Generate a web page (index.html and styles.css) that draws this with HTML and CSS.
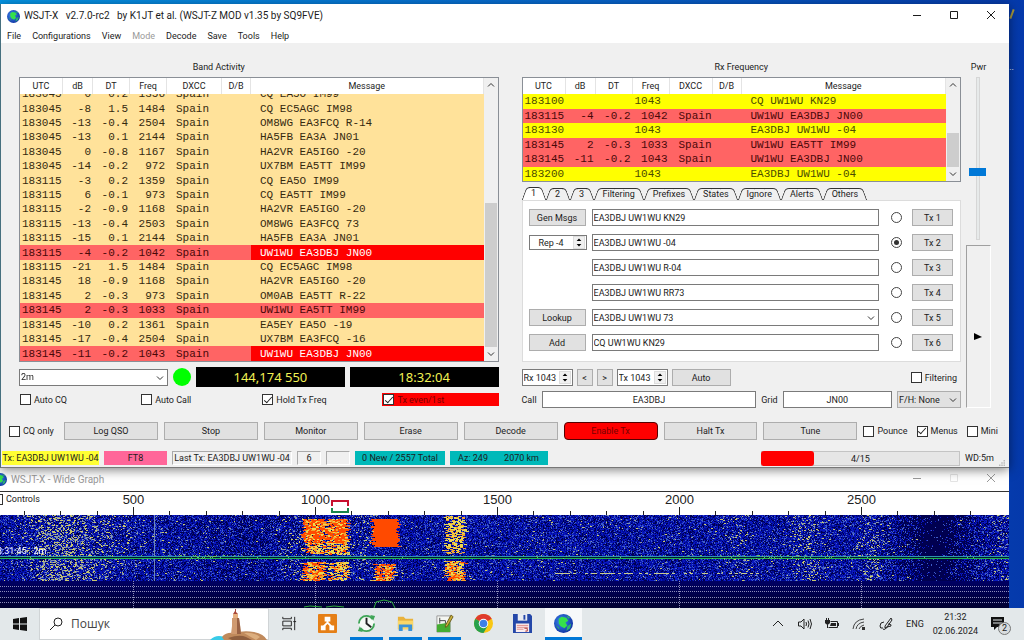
FILE: index.html
```html
<!DOCTYPE html>
<html lang="en">

<head>
    <meta charset="utf-8">
    <title>WSJT-X</title>
    <meta name="viewport" content="width=device-width, initial-scale=1">
    <link rel="stylesheet" href="styles.css">
</head>

<body>
    <svg class="defs" width="0" height="0">
        <defs>
            <radialGradient id="sea" cx="40%" cy="40%" r="60%">
                <stop offset="0" stop-color="#3f8cf0" />
                <stop offset="1" stop-color="#1238a8" />
            </radialGradient>
            <symbol id="globe" viewBox="0 0 20 20">
                <circle cx="10" cy="10" r="10" fill="url(#sea)" />
                <path d="M5 5 L8 3 L13 4 L15 7 L12 9 L14 12 L11 15 L7 13 L5 10 Z" fill="#35e04a" />
                <path d="M14 13 L18 10 L17 15 L13 18 Z M2 12 L5 14 L6 17 Z M13 1 L17 4 L15 5 Z" fill="#2bb46c" />
            </symbol>
            <symbol id="chev" viewBox="0 0 8 8">
                <path d="M1 2.500 L4 5.500 L7 2.500" fill="none" stroke="#333" />
            </symbol>
            <symbol id="min" viewBox="0 0 10 10"><path d="M1 5.500 H9" stroke="currentColor" /></symbol>
            <symbol id="max" viewBox="0 0 10 10"><path d="M1.500 1.500 H8.500 V8.500 H1.500 Z" fill="none" stroke="currentColor" /></symbol>
            <symbol id="close" viewBox="0 0 10 10"><path d="M1 1 L9 9 M9 1 L1 9" stroke="currentColor" /></symbol>
        </defs>
    </svg>

    <div class="desktop">
        <span class="shortcut-mark"></span>
        <span class="shortcut-name">..</span>

        <main class="window main-window">
            <header class="titlebar">
                <svg class="app-icon"><use href="#globe" /></svg>
                <h1>WSJT-X &nbsp; v2.7.0-rc2 &nbsp; by K1JT et al. (WSJT-Z MOD v1.35 by SQ9FVE)</h1>
                <div class="window-buttons">
                    <button aria-label="Minimize"><svg><use href="#min" /></svg></button>
                    <button aria-label="Maximize"><svg><use href="#max" /></svg></button>
                    <button aria-label="Close"><svg><use href="#close" /></svg></button>
                </div>
            </header>
            <nav class="menubar">
                <button>File</button>
                <button>Configurations</button>
                <button>View</button>
                <button disabled>Mode</button>
                <button>Decode</button>
                <button>Save</button>
                <button>Tools</button>
                <button>Help</button>
            </nav>

            <div class="panels">
                <section class="left">
                    <h2>Band Activity</h2>
                    <div class="log band-log">
                        <div class="log-view">
                            <table>
                                <colgroup>
                                    <col class="c-utc"><col class="c-db"><col class="c-dt"><col class="c-freq"><col class="c-dxcc"><col class="c-new"><col>
                                </colgroup>
                                <thead>
                                    <tr><th>UTC</th><th>dB</th><th>DT</th><th>Freq</th><th>DXCC</th><th>D/B</th><th>Message</th></tr>
                                </thead>
                                <tbody>
                                    <tr><td>183045</td><td>0</td><td>0.2</td><td>1356</td><td>Spain</td><td></td><td>CQ EA5O IM99</td></tr>
                                    <tr><td>183045</td><td>-8</td><td>1.5</td><td>1484</td><td>Spain</td><td></td><td>CQ EC5AGC IM98</td></tr>
                                    <tr><td>183045</td><td>-13</td><td>-0.4</td><td>2504</td><td>Spain</td><td></td><td>OM8WG EA3FCQ R-14</td></tr>
                                    <tr><td>183045</td><td>-13</td><td>0.1</td><td>2144</td><td>Spain</td><td></td><td>HA5FB EA3A JN01</td></tr>
                                    <tr><td>183045</td><td>0</td><td>-0.8</td><td>1167</td><td>Spain</td><td></td><td>HA2VR EA5IGO -20</td></tr>
                                    <tr><td>183045</td><td>-14</td><td>-0.2</td><td>972</td><td>Spain</td><td></td><td>UX7BM EA5TT IM99</td></tr>
                                    <tr><td>183115</td><td>-3</td><td>0.2</td><td>1359</td><td>Spain</td><td></td><td>CQ EA5O IM99</td></tr>
                                    <tr><td>183115</td><td>6</td><td>-0.1</td><td>973</td><td>Spain</td><td></td><td>CQ EA5TT IM99</td></tr>
                                    <tr><td>183115</td><td>-2</td><td>-0.9</td><td>1168</td><td>Spain</td><td></td><td>HA2VR EA5IGO -20</td></tr>
                                    <tr><td>183115</td><td>-13</td><td>-0.4</td><td>2503</td><td>Spain</td><td></td><td>OM8WG EA3FCQ 73</td></tr>
                                    <tr><td>183115</td><td>-15</td><td>0.1</td><td>2144</td><td>Spain</td><td></td><td>HA5FB EA3A JN01</td></tr>
                                    <tr class="mine call"><td>183115</td><td>-4</td><td>-0.2</td><td>1042</td><td>Spain</td><td></td><td>UW1WU EA3DBJ JN00</td></tr>
                                    <tr><td>183115</td><td>-21</td><td>1.5</td><td>1484</td><td>Spain</td><td></td><td>CQ EC5AGC IM98</td></tr>
                                    <tr><td>183145</td><td>18</td><td>-0.9</td><td>1168</td><td>Spain</td><td></td><td>HA2VR EA5IGO -20</td></tr>
                                    <tr><td>183145</td><td>2</td><td>-0.3</td><td>973</td><td>Spain</td><td></td><td>OM0AB EA5TT R-22</td></tr>
                                    <tr class="mine"><td>183145</td><td>2</td><td>-0.3</td><td>1033</td><td>Spain</td><td></td><td>UW1WU EA5TT IM99</td></tr>
                                    <tr><td>183145</td><td>-10</td><td>0.2</td><td>1361</td><td>Spain</td><td></td><td>EA5EY EA5O -19</td></tr>
                                    <tr><td>183145</td><td>-17</td><td>-0.4</td><td>2504</td><td>Spain</td><td></td><td>UX7BM EA3FCQ -16</td></tr>
                                    <tr class="mine call"><td>183145</td><td>-11</td><td>-0.2</td><td>1043</td><td>Spain</td><td></td><td>UW1WU EA3DBJ JN00</td></tr>
                                </tbody>
                            </table>
                        </div>
                        <div class="scrollbar">
                            <svg class="up"><use href="#chev" /></svg>
                            <div class="thumb"></div>
                            <svg><use href="#chev" /></svg>
                        </div>
                    </div>
                    <div class="band-row">
                        <div class="combo band">
                            <select aria-label="Band"><option>2m</option></select>
                            <svg><use href="#chev" /></svg>
                        </div>
                        <span class="led"></span>
                        <output class="lcd">144,174 550</output>
                        <output class="lcd">18:32:04</output>
                    </div>
                    <div class="checks">
                        <label><input type="checkbox"> Auto CQ</label>
                        <label><input type="checkbox"> Auto Call</label>
                        <label><input type="checkbox" checked> Hold Tx Freq</label>
                        <label class="tx-first"><input type="checkbox" checked> Tx even/1st</label>
                    </div>
                </section>

                <section class="right">
                    <h2>Rx Frequency</h2>
                    <div class="log rx-log">
                        <div class="log-view">
                            <table>
                                <colgroup>
                                    <col class="c-utc"><col class="c-db"><col class="c-dt"><col class="c-freq"><col class="c-rx-dxcc"><col class="c-new"><col>
                                </colgroup>
                                <thead>
                                    <tr><th>UTC</th><th>dB</th><th>DT</th><th>Freq</th><th>DXCC</th><th>D/B</th><th>Message</th></tr>
                                </thead>
                                <tbody>
                                    <tr class="sent"><td>183100</td><td></td><td></td><td>1043</td><td></td><td></td><td>CQ UW1WU KN29</td></tr>
                                    <tr class="mine"><td>183115</td><td>-4</td><td>-0.2</td><td>1042</td><td>Spain</td><td></td><td>UW1WU EA3DBJ JN00</td></tr>
                                    <tr class="sent"><td>183130</td><td></td><td></td><td>1043</td><td></td><td></td><td>EA3DBJ UW1WU -04</td></tr>
                                    <tr class="mine"><td>183145</td><td>2</td><td>-0.3</td><td>1033</td><td>Spain</td><td></td><td>UW1WU EA5TT IM99</td></tr>
                                    <tr class="mine"><td>183145</td><td>-11</td><td>-0.2</td><td>1043</td><td>Spain</td><td></td><td>UW1WU EA3DBJ JN00</td></tr>
                                    <tr class="sent"><td>183200</td><td></td><td></td><td>1043</td><td></td><td></td><td>EA3DBJ UW1WU -04</td></tr>
                                </tbody>
                            </table>
                        </div>
                        <div class="scrollbar">
                            <svg class="up"><use href="#chev" /></svg>
                            <div class="thumb"></div>
                            <svg><use href="#chev" /></svg>
                        </div>
                    </div>

                    <div class="tabs" role="tablist">
                        <button role="tab" aria-selected="true"><span>1</span></button>
                        <button role="tab"><span>2</span></button>
                        <button role="tab"><span>3</span></button>
                        <button role="tab"><span>Filtering</span></button>
                        <button role="tab"><span>Prefixes</span></button>
                        <button role="tab"><span>States</span></button>
                        <button role="tab"><span>Ignore</span></button>
                        <button role="tab"><span>Alerts</span></button>
                        <button role="tab"><span>Others</span></button>
                    </div>
                    <div class="messages">
                        <button class="btn">Gen Msgs</button>
                        <input type="text" value="EA3DBJ UW1WU KN29" aria-label="Message 1">
                        <input type="radio" name="next" aria-label="Next Tx 1">
                        <button class="btn">Tx 1</button>

                        <div class="spin report">
                            <input type="text" value="Rep -4" aria-label="Report">
                            <svg viewBox="0 0 12 14"><path d="M3 5 L6 2 L9 5 Z M3 9 L6 12 L9 9 Z" /></svg>
                        </div>
                        <input type="text" value="EA3DBJ UW1WU -04" aria-label="Message 2">
                        <input type="radio" name="next" aria-label="Next Tx 2" checked>
                        <button class="btn">Tx 2</button>

                        <span></span>
                        <input type="text" value="EA3DBJ UW1WU R-04" aria-label="Message 3">
                        <input type="radio" name="next" aria-label="Next Tx 3">
                        <button class="btn">Tx 3</button>

                        <span></span>
                        <input type="text" value="EA3DBJ UW1WU RR73" aria-label="Message 4">
                        <input type="radio" name="next" aria-label="Next Tx 4">
                        <button class="btn">Tx 4</button>

                        <button class="btn">Lookup</button>
                        <div class="combo">
                            <select aria-label="Message 5"><option>EA3DBJ UW1WU 73</option></select>
                            <svg><use href="#chev" /></svg>
                        </div>
                        <input type="radio" name="next" aria-label="Next Tx 5">
                        <button class="btn">Tx 5</button>

                        <button class="btn">Add</button>
                        <input type="text" value="CQ UW1WU KN29" aria-label="Message 6">
                        <input type="radio" name="next" aria-label="Next Tx 6">
                        <button class="btn">Tx 6</button>
                    </div>

                    <div class="freq-row">
                        <div class="spin">
                            <input type="text" value="Rx 1043" aria-label="Rx frequency">
                            <svg viewBox="0 0 12 14"><path d="M3 5 L6 2 L9 5 Z M3 9 L6 12 L9 9 Z" /></svg>
                        </div>
                        <button class="btn arrow">&lt;</button>
                        <button class="btn arrow">&gt;</button>
                        <div class="spin">
                            <input type="text" value="Tx 1043" aria-label="Tx frequency">
                            <svg viewBox="0 0 12 14"><path d="M3 5 L6 2 L9 5 Z M3 9 L6 12 L9 9 Z" /></svg>
                        </div>
                        <button class="btn auto">Auto</button>
                        <label class="filtering"><input type="checkbox"> Filtering</label>
                    </div>
                    <div class="call-row">
                        <label for="call">Call</label>
                        <input id="call" type="text" value="EA3DBJ">
                        <label for="grid">Grid</label>
                        <input id="grid" type="text" value="JN00">
                        <div class="combo fox">
                            <select aria-label="Fox or hound"><option>F/H: None</option></select>
                            <svg><use href="#chev" /></svg>
                        </div>
                    </div>
                </section>

                <aside class="power">
                    <label for="pwr">Pwr</label>
                    <input id="pwr" type="range" value="41">
                    <div class="meter"><svg viewBox="0 0 8 8"><path d="M0 0 L8 4 L0 7 Z" /></svg></div>
                </aside>
            </div>

            <div class="actions">
                <label><input type="checkbox"> CQ only</label>
                <button class="btn">Log QSO</button>
                <button class="btn">Stop</button>
                <button class="btn">Monitor</button>
                <button class="btn">Erase</button>
                <button class="btn">Decode</button>
                <button class="btn enabled">Enable Tx</button>
                <button class="btn">Halt Tx</button>
                <button class="btn">Tune</button>
                <label><input type="checkbox"> Pounce</label>
                <label><input type="checkbox" checked> Menus</label>
                <label><input type="checkbox"> Mini</label>
            </div>

            <footer class="statusbar">
                <span class="st-tx">Tx: EA3DBJ UW1WU -04</span>
                <span class="st-mode">FT8</span>
                <span class="st-last">Last Tx: EA3DBJ UW1WU -04</span>
                <span class="st-small">6</span>
                <span class="st-small"></span>
                <span class="st-new">0 New / 2557 Total</span>
                <span class="st-az"><b>Az: 249</b><b>2070 km</b></span>
                <div class="progress"><i></i>4/15</div>
                <span class="st-wd">WD:5m</span>
                <svg class="grip" viewBox="0 0 8 8"><path d="M6 0h2v2h-2zM3 3h2v2h-2zM6 3h2v2h-2zM0 6h2v2h-2zM3 6h2v2h-2zM6 6h2v2h-2z" /></svg>
            </footer>
        </main>

        <section class="window wide-graph">
            <header class="titlebar">
                <svg class="app-icon"><use href="#globe" /></svg>
                <h1>WSJT-X - Wide Graph</h1>
                <div class="window-buttons">
                    <button aria-label="Minimize"><svg><use href="#min" /></svg></button>
                    <button aria-label="Maximize" disabled><svg><use href="#max" /></svg></button>
                    <button aria-label="Close"><svg><use href="#close" /></svg></button>
                </div>
            </header>
            <div class="ruler">
                <svg id="scale"></svg>
                <label class="controls"><input type="checkbox"> Controls</label>
            </div>
            <div class="waterfall">
                <canvas id="waterfall"></canvas>
                <span class="stamp">18:31:45 &nbsp; 2m</span>
            </div>
        </section>
    </div>

    <footer class="taskbar">
        <button class="start" aria-label="Start">
            <svg viewBox="0 0 14 14"><path d="M0 2 L6 1 V6.500 H0 Z M7 1 L14 0 V6.500 H7 Z M0 7.500 H6 V13 L0 12 Z M7 7.500 H14 V14 L7 13 Z" fill="#111" /></svg>
        </button>
        <div class="search">
            <svg viewBox="0 0 14 14"><circle cx="9" cy="5" r="4" fill="none" stroke="#222" /><path d="M6 8 L1 13" stroke="#222" /></svg>
            <input type="search" placeholder="Пошук" aria-label="Пошук">
            <svg class="lighthouse" viewBox="0 0 58 31">
                <path d="M0 31 Q6 25 14 28 L20 31 Z" fill="#39cbe8" />
                <path d="M12 28 Q16 23 24 24 Q34 21 44 23 Q54 25 57 31 H14 Z" fill="#c08a5c" />
                <path d="M18 29 Q30 25 36 28 L42 31 H22 Z" fill="#8f5f3f" />
                <path d="M34 24 Q44 23 50 28 L46 31 Z" fill="#dcae7e" />
                <path d="M22 9 H29 L30 16 L31 25 H21 L22 17 Z" fill="#d09a70" />
                <path d="M27 9 H29 L30 16 L31 25 H27 Z" fill="#9a6244" />
                <path d="M23 5 H28 V9 H23 Z" fill="#e7b07f" />
                <path d="M23 5 L25 2 L28 5 Z" fill="#a84838" />
                <path d="M25.500 0 V3" stroke="#a84838" />
            </svg>
        </div>
        <div class="tasks">
            <button aria-label="Task view">
                <svg viewBox="0 0 20 20"><path d="M4 3 V5 H13 V3 M4 17 V15 H13 V17 M4 7.500 H13 V12.500 H4 Z M16.500 3 V17 M15 8 H18" fill="none" stroke="#222" /></svg>
            </button>
            <button aria-label="Cluster">
                <svg viewBox="0 0 20 20"><rect width="20" height="20" rx="1" fill="#e57f17" /><path d="M10 7 V10 M10 9 L6 13 M10 9 L14 13" stroke="#fff" stroke-width="2" /><path d="M7 3 H13 V8 H7 Z M3 12 H8 V17 H3 Z M12 12 H17 V17 H12 Z" fill="#fff" /></svg>
            </button>
            <button class="running" aria-label="Time sync">
                <svg viewBox="0 0 20 20"><circle cx="10" cy="10" r="8" fill="#f6faf6" stroke="#3fa557" stroke-width="2" stroke-dasharray="20 5" /><path d="M14 1 L19 2 L17 7 Z M6 19 L1 18 L3 13 Z" fill="#3fa557" /><path d="M10 4 V10 L15 14" fill="none" stroke="#222" stroke-width="2" /></svg>
            </button>
            <button class="running" aria-label="Explorer">
                <svg viewBox="0 0 20 20"><path d="M2 3 H8 L10 5 H18 V16 H2 Z" fill="#e9b23c" /><path d="M2 7 H18 V16 H2 Z" fill="#fbd767" /><path d="M3 11 H17 V18 H13 V14 H7 V18 H3 Z" fill="#3b93d8" /></svg>
            </button>
            <button class="running" aria-label="Log">
                <svg viewBox="0 0 20 20"><path d="M2 2 H16 V19 H2 Z" fill="#f4f6f2" stroke="#999" /><path d="M2 11 L16 9 V19 H2 Z" fill="#44ad32" /><path d="M5 7 H11 V10 M5 4 V10" stroke="#444" fill="none" /><path d="M17 1 L19 3 L13 13 L11 14 L11 12 Z" fill="#c9b13b" stroke="#6a5a1a" /></svg>
            </button>
            <button aria-label="Chrome">
                <svg viewBox="0 0 20 20"><circle cx="10" cy="10" r="10" fill="#f9c713" /><path d="M10 10 L1.340 5 A10 10 0 0 1 18.660 5 Z" fill="#df3a2c" /><path d="M1.340 5 A10 10 0 0 0 10 20 L14.300 12.500 L10 10 Z" fill="#28a14c" /><circle cx="10" cy="10" r="5" fill="#fff" /><circle cx="10" cy="10" r="4" fill="#3d7fe8" /></svg>
            </button>
            <button aria-label="Commander">
                <svg viewBox="0 0 20 20"><path d="M0 0 H18 L20 2 V20 H0 Z" fill="#2447a8" /><path d="M5 0 H15 V7 H5 Z" fill="#e9ecf2" /><path d="M11 1 H13 V6 H11 Z" fill="#2447a8" /><path d="M3 10 H17 V19 H3 Z" fill="#fbeeee" /><path d="M4 12 H16 M4 14 H16 M4 16 H11" stroke="#d88" /><path d="M12 15 h3 v3 h-2" fill="none" stroke="#a33" /></svg>
            </button>
            <button class="running active" aria-label="WSJT-X"><svg><use href="#globe" /></svg></button>
        </div>
        <div class="tray">
            <svg viewBox="0 0 14 14"><path d="M2 9 L7 4 L12 9" fill="none" stroke="#222" /></svg>
            <svg viewBox="0 0 14 14"><path d="M0.500 5 H3 L6 2 V12 L3 9 H0.500 Z M8 5 Q9 7 8 9 M10 3.500 Q12 7 10 10.500 M12 2 Q15 7 12 12" fill="none" stroke="#222" /></svg>
            <svg viewBox="0 0 14 14"><path d="M5.500 4.500 H12.500 V10.500 H3.500" fill="none" stroke="#222" /><path d="M6 6 H11 V9 H5 Z M13 6 H14 V9 H13 Z" fill="#222" /><path d="M0 3 H5 V6 Q2.500 9 0 6 Z M1 1 H2 V3 H1 Z M3 1 H4 V3 H3 Z M2 7 H3 V11 H2 Z" fill="#222" /></svg>
            <svg viewBox="0 0 14 14"><path d="M1 12 Q2 3 12 2 M4 12 Q5 6 12 5 M7 12 Q8 9 12 8" fill="none" stroke="#444" /><path d="M10 10 H13 V13 H10 Z" fill="#333" /></svg>
            <svg viewBox="0 0 14 14"><path d="M12 1 L13 3 L8 10 L6 11 L6 9 Z M5 5 Q1 5 1 9 Q1 12 4 11 M9 7 Q13 7 12 9 Q9 9 6 12 Q5 13 4 12" fill="none" stroke="#222" /></svg>
            <span class="lang">ENG</span>
            <time>21:32<br>02.06.2024</time>
            <div class="notes">
                <svg viewBox="0 0 14 14"><path d="M0 0 H13 V10 H6 L3 13 V10 H0 Z" fill="#111" /><path d="M2 3 H11 M2 6 H11" stroke="#e3e8ea" /></svg>
                <span class="badge">2</span>
            </div>
        </div>
    </footer>

    <script src="script.js"></script>
</body>

</html>
```
FILE: styles.css
```css
* {
    box-sizing: border-box;
}

html,
body {
    margin: 0;
    padding: 0;
    height: 100%;
}

body {
    display: flex;
    flex-direction: column;
    overflow: hidden;
    font: 9px/12px Roboto, "Noto Sans", sans-serif;
    color: #1c1c1c;
}

button,
input,
select {
    font: inherit;
    color: inherit;
    margin: 0;
    padding: 0;
    border: 0;
    background: none;
    border-radius: 0;
    appearance: none;
}

h1,
h2 {
    margin: 0;
    font-weight: normal;
    font-size: inherit;
}

label {
    display: flex;
    align-items: center;
    gap: 3px;
    white-space: nowrap;
}

.defs {
    position: absolute;
}

/* desktop and windows */

.desktop {
    position: relative;
    flex: 1;
    overflow: hidden;
    background: linear-gradient(90deg, #0596e6, #0763cb 60%, #0539ab);
}

.shortcut-mark {
    position: absolute;
    right: 11px;
    top: 9px;
    width: 2px;
    height: 10px;
    background: #a99b3c;
    transform: rotate(20deg);
}

.shortcut-name {
    position: absolute;
    right: 10px;
    top: 61px;
    color: #fff;
}

.window {
    position: absolute;
    left: 0;
    right: 15px;
}

.main-window {
    top: 4px;
    z-index: 1;
    background: #f0f0f0;
    border-left: 1px solid #46707f;
    border-bottom: 1px solid #777;
    box-shadow: 0 2px 10px rgba(0, 0, 0, 0.5);
}

.titlebar {
    display: flex;
    align-items: center;
    height: 24px;
    padding-left: 6px;
    background: #fff;
}

.titlebar h1 {
    flex: 1;
    margin-left: 4px;
    font-size: 10px;
    line-height: 14px;
}

.app-icon {
    width: 13px;
    height: 13px;
}

.window-buttons {
    display: flex;
}

.window-buttons button {
    width: 37px;
    height: 20px;
}

.window-buttons svg {
    width: 10px;
    height: 10px;
}

.menubar {
    display: flex;
    gap: 11px;
    height: 15px;
    padding: 1px 0 0 6px;
    background: #fff;
}

.menubar button:disabled {
    color: #999;
}

/* columns */

.panels {
    display: grid;
    grid-template-columns: 497fr 439fr 25px;
    column-gap: 5px;
    padding: 18px 18px 0 18px;
}

.left {
    margin-right: 18px;
}

h2 {
    margin-bottom: 4px;
    text-align: center;
}

.left h2 {
    padding-right: 80px;
}

.log {
    display: flex;
    border: 1px solid #8a8f96;
    background: #fff;
}

.band-log {
    height: 285px;
}

.rx-log {
    height: 105px;
}

.log-view {
    flex: 1;
    overflow: hidden;
}

.log table {
    width: 100%;
    table-layout: fixed;
    border-collapse: separate;
    border-spacing: 0;
    background: #ffe29a;
}

.band-log table {
    height: 290px;
}

.rx-log table {
    height: 103px;
}

.log th {
    position: sticky;
    top: 0;
    height: 16px;
    padding: 0;
    background: #fff;
    border-right: 1px solid #e4e4e4;
    font-weight: normal;
}

.log td {
    padding: 0 2px;
    font: 11px/12px "Liberation Mono", monospace;
    white-space: nowrap;
    color: #35290f;
}

.log td:nth-child(n+2):nth-child(-n+4) {
    text-align: right;
}

.log td:nth-child(n+5) {
    padding-left: 9px;
}

.c-utc {
    width: 43px;
}

.c-db {
    width: 30px;
}

.c-dt,
.c-freq {
    width: 37px;
}

.c-dxcc {
    width: 55px;
}

.c-rx-dxcc {
    width: 43px;
}

.c-new {
    width: 29px;
}

.log .mine td {
    background: #ff6464;
    color: #4a0808;
}

.log .call td:last-child {
    background: #f00;
    color: #fff;
}

.log .sent td {
    background: #ff0;
    color: #4c4c00;
}

.log .sent td:nth-child(4) {
    text-align: left;
}

.scrollbar {
    display: flex;
    flex-direction: column;
    align-items: center;
    width: 14px;
    padding: 3px 1px;
    background: #f0f0f0;
}

.scrollbar svg {
    width: 8px;
    height: 8px;
}

.scrollbar .up {
    transform: rotate(180deg);
}

.thumb {
    width: 12px;
    margin-top: auto;
    margin-bottom: 3px;
    background: #cdcdcd;
}

.band-log .thumb {
    height: 144px;
}

.rx-log .thumb {
    height: 34px;
}

/* form controls */

.btn {
    height: 17px;
    border: 1px solid #adadad;
    background: #e1e1e1;
    text-align: center;
}

input[type="text"],
.combo,
.spin {
    height: 17px;
    min-width: 0;
    border: 1px solid #7a7a7a;
    background: #fff;
}

input[type="text"] {
    padding: 0 1px;
}

.combo {
    position: relative;
}

.combo select {
    display: block;
    width: 100%;
    height: 15px;
    padding: 0 1px;
}

.combo svg {
    position: absolute;
    right: 3px;
    top: 4px;
    width: 8px;
    height: 8px;
    pointer-events: none;
}

.spin {
    display: flex;
    align-items: center;
    width: 51px;
}

.spin input[type="text"] {
    flex: 1;
    width: 100%;
    height: 15px;
    border: 0;
}

.spin svg {
    flex: none;
    width: 12px;
    height: 13px;
    margin-right: 1px;
    border: 1px solid #ddd;
    background: #f0f0f0;
}

input[type="checkbox"] {
    display: grid;
    place-items: center;
    flex: none;
    width: 11px;
    height: 11px;
    border: 1px solid #333;
    background: #fff;
}

input[type="checkbox"]:checked::before {
    content: "";
    width: 7px;
    height: 3px;
    border-left: 1px solid #222;
    border-bottom: 1px solid #222;
    transform: translateY(-1px) rotate(-48deg);
}

input[type="radio"] {
    display: grid;
    place-items: center;
    width: 11px;
    height: 11px;
    border: 1px solid #444;
    border-radius: 50%;
    background: #fff;
}

input[type="radio"]:checked::before {
    content: "";
    width: 5px;
    height: 5px;
    border-radius: 50%;
    background: #333;
}

/* left column */

.band-row {
    display: flex;
    align-items: center;
    gap: 5px;
    margin-top: 5px;
}

.band {
    width: 149px;
}

.led {
    width: 18px;
    height: 18px;
    border-radius: 50%;
    background: #0f0;
}

.lcd {
    flex: 1;
    height: 20px;
    background: #000;
    color: #f2f254;
    font: 13px/20px "Noto Sans", sans-serif;
    text-align: center;
}

.checks {
    display: grid;
    grid-template-columns: 121fr 121fr 121fr 116fr;
    margin-top: 6px;
}

.checks label {
    height: 13px;
    padding-left: 1px;
}

.checks .tx-first {
    background: #f00;
    color: #700;
}

/* right column */

.tabs {
    display: flex;
    align-items: flex-end;
    height: 18px;
}

.tabs button {
    position: relative;
    min-width: 24px;
    height: 12px;
    padding: 0 9px;
}

.tabs button::before,
.tabs button::after {
    content: "";
    position: absolute;
    top: 0;
    bottom: 0;
    width: 50%;
    border-top: 1px solid #333;
}

.tabs button::before {
    left: 2px;
    border-left: 1px solid #333;
    border-top-left-radius: 4px;
    transform: skewX(-20deg);
}

.tabs button::after {
    right: 2px;
    border-right: 1px solid #333;
    border-top-right-radius: 4px;
    transform: skewX(20deg);
}

.tabs [aria-selected="true"] {
    height: 13px;
}

.tabs [aria-selected="true"]::before,
.tabs [aria-selected="true"]::after {
    background: #fff;
}

.tabs span {
    position: relative;
    z-index: 1;
    display: block;
    line-height: 13px;
}

.messages {
    display: grid;
    grid-template-columns: 57px 1fr 11px 45px;
    grid-auto-rows: 25px;
    align-items: center;
    column-gap: 6px;
    height: 162px;
    padding: 4px 7px 0 6px;
    border: 1px solid #dcdcdc;
    background: #fff;
}

.messages > :nth-child(4n+2) {
    margin-right: 6px;
}

.messages > :nth-child(4n) {
    margin-left: 4px;
}

.report {
    width: 58px;
    height: 15px;
}

.report input[type="text"] {
    height: 13px;
    text-align: center;
}

.freq-row {
    display: flex;
    gap: 4px;
    margin-top: 7px;
}

.arrow {
    width: 16px;
}

.auto {
    width: 59px;
}

.filtering {
    margin-left: auto;
    margin-right: 4px;
}

.call-row {
    display: flex;
    align-items: center;
    gap: 5px;
    margin-top: 5px;
}

.call-row input {
    text-align: center;
}

#call {
    flex: 2 1 0;
}

#grid {
    flex: 1 1 0;
}

.fox {
    width: 64px;
    background: #e1e1e1;
    border-color: #adadad;
}

/* power column */

.power {
    display: flex;
    flex-direction: column;
    align-items: center;
}

#pwr {
    width: 17px;
    height: 163px;
    margin-top: 4px;
    writing-mode: vertical-lr;
    direction: rtl;
}

#pwr::-webkit-slider-runnable-track {
    width: 4px;
    height: 100%;
    margin: 0 auto;
    border: 1px solid #d6d6d6;
    background: #e7eaea;
}

#pwr::-webkit-slider-thumb {
    appearance: none;
    width: 17px;
    height: 8px;
    margin-left: -8px;
    background: #0078d7;
}

.meter {
    display: grid;
    place-items: center;
    flex: 1;
    width: 100%;
    margin-top: 5px;
    padding-top: 20px;
    border: 1px solid #fff;
    border-left-color: #a0a0a0;
    border-top-color: #a0a0a0;
}

.meter svg {
    width: 8px;
    height: 8px;
}

/* bottom rows */

.actions {
    display: flex;
    align-items: center;
    gap: 6px;
    margin: 14px 11px 0 8px;
}

.actions .btn {
    flex: 1;
    height: 18px;
}

.actions .enabled {
    border: 1px solid #500;
    border-radius: 4px;
    background: #f00;
    color: #700;
}

.actions label:first-child {
    width: 49px;
}

.actions label:nth-last-child(-n+2) {
    margin-left: 3px;
}

.statusbar {
    display: flex;
    align-items: center;
    gap: 5px;
    height: 16px;
    margin: 10px 4px 1px 1px;
}

.statusbar > span {
    height: 14px;
    line-height: 14px;
    text-align: center;
    white-space: nowrap;
}

.st-tx {
    width: 97px;
    background: #ff3;
}

.st-mode {
    width: 63px;
    background: #ff6699;
}

.st-last,
.st-small {
    border: 1px solid #fff;
    border-top-color: #aaa;
    border-left-color: #aaa;
}

.statusbar .st-last,
.statusbar .st-small {
    line-height: 12px;
}

.st-last {
    width: 120px;
}

.st-small {
    width: 24px;
}

.st-new,
.st-az {
    background: #00b9b9;
}

.st-new {
    width: 90px;
}

.st-az {
    display: flex;
    justify-content: space-between;
    width: 98px;
    padding: 0 9px 0 8px;
}

.st-az b {
    font-weight: normal;
}

.progress {
    position: relative;
    width: 199px;
    height: 15px;
    margin-left: auto;
    border: 1px solid #c4c4c4;
    background: #e6e6e6;
    line-height: 15px;
    text-align: center;
}

.progress i {
    position: absolute;
    left: -1px;
    top: -1px;
    bottom: -1px;
    width: 53px;
    border-radius: 3px;
    background: #f00;
}

.grip {
    align-self: flex-end;
    width: 6px;
    height: 6px;
    fill: #bbb;
}

/* wide graph */

.wide-graph {
    top: 468px;
    bottom: 0;
    display: flex;
    flex-direction: column;
    background: #fff;
}

.wide-graph .titlebar {
    height: 24px;
    margin-left: -12px;
    border-bottom: 1px solid #333;
    color: #999;
}

.wide-graph button:disabled {
    color: #e4e4e4;
}

.ruler {
    position: relative;
    height: 23px;
}

.ruler svg {
    display: block;
    width: 100%;
    height: 23px;
}

.ruler text {
    font: 13px "Liberation Sans", sans-serif;
    text-anchor: middle;
    fill: #222;
}

.controls {
    position: absolute;
    left: -8px;
    top: 1px;
}

.waterfall {
    position: relative;
    flex: 1;
    overflow: hidden;
    background: #00004c;
}

.waterfall canvas {
    display: block;
}

.stamp {
    position: absolute;
    left: -8px;
    top: 30px;
    color: #fff;
    white-space: nowrap;
}

/* taskbar */

.taskbar {
    display: flex;
    align-items: stretch;
    height: 32px;
    background: #e3e8ea;
}

.start {
    width: 39px;
}

.start svg {
    display: block;
    width: 14px;
    height: 14px;
    margin: 0 auto;
}

.search {
    display: flex;
    align-items: center;
    gap: 8px;
    width: 230px;
    padding-left: 9px;
    border: 1px solid #d0d4d6;
    background: #fff;
}

.search svg {
    flex: none;
    width: 14px;
    height: 14px;
}

.search input {
    flex: 1;
    min-width: 0;
    font: 12px/16px "Open Sans", sans-serif;
}

.search input::placeholder {
    color: #444;
}

.search .lighthouse {
    width: 58px;
    height: 31px;
}

.tasks {
    display: flex;
    gap: 6px;
    margin-left: 3px;
}

.tasks button {
    width: 33px;
    border-bottom: 3px solid transparent;
}

.tasks svg {
    display: block;
    width: 19px;
    height: 19px;
    margin: 2px auto 0;
}

.tasks .running {
    border-bottom-color: #0078d7;
}

.tasks .active {
    width: 37px;
    background: #f7f9fa;
}

.tray {
    display: flex;
    align-items: center;
    gap: 13px;
    margin-left: auto;
    padding-right: 13px;
}

.tray svg {
    width: 14px;
    height: 14px;
}

.tray time {
    margin-left: -4px;
    line-height: 14px;
    text-align: center;
}

.notes {
    position: relative;
    width: 20px;
    height: 14px;
}

.badge {
    position: absolute;
    left: 7px;
    top: 5px;
    width: 13px;
    height: 13px;
    border: 1px solid #777;
    border-radius: 50%;
    background: #d8dcde;
    line-height: 11px;
    text-align: center;
}
```
FILE: script.js
```javascript
const HZ_500 = 182; // pixels per 500 Hz
const FIRST = 133; // x of the 500 Hz mark

window.addEventListener('load', () => {
    for (const view of document.querySelectorAll('.log-view')) {
        view.scrollTop = view.scrollHeight; // newest decode stays visible
    }
    drawScale();
    drawWaterfall();
});

// small generator so that the noise is the same on every load
let seed = 4242;
function rnd() {
    seed = (seed * 1664525 + 1013904223) % 4294967296;
    return seed / 4294967296;
}

function drawScale() {
    const scale = document.querySelector('#scale');
    let out = '';
    let ticks = '';
    for (let i = -3; i < 24; i++) {
        const x = Math.round(FIRST + i * HZ_500 / 5) + 0.5;
        const major = i % 5 === 0;
        ticks += `M${x} ${major ? 15 : 19}V23`;
        if (major) {
            out += `<text x="${x}" y="12">${500 + i * 100}</text>`;
        }
    }
    out += `<path d="${ticks}" stroke="#222"/>`;
    // tx marker red, rx marker green
    out += '<path d="M332 14V9H348V14" fill="none" stroke="#c8102e" stroke-width="2"/>';
    out += '<path d="M332 16V20H348V16" fill="none" stroke="#18864b" stroke-width="2"/>';
    scale.innerHTML = out;
}

function bump(x, center, width) {
    const d = (x - center) / width;
    return Math.exp(-d * d);
}

function drawWaterfall() {
    const canvas = document.querySelector('#waterfall');
    const width = canvas.width = canvas.parentElement.clientWidth;
    const height = canvas.height = canvas.parentElement.clientHeight;
    const ctx = canvas.getContext('2d');

    // background noise
    for (let y = 0; y < 66; y++) {
        for (let x = 0; x < width; x++) {
            const dark = bump(x, 935, 34) * 0.7 + bump(x, 240, 60) * 0.15;
            let color = '#0a18c0';
            const r = rnd();
            if (r < 0.25 + dark) color = '#000050';
            else if (r < 0.55 + dark * 0.5) color = '#000a98';
            else if (r > 0.86 + dark * 0.14) color = '#3f5cc8';
            if (x === 154) color = '#6f88b8';
            ctx.fillStyle = color;
            ctx.fillRect(x, y, 1, 1);
        }
    }

    // weak traces, two pixels wide
    for (let y = 0; y < 66; y++) {
        for (let x = 0; x < width; x++) {
            const yellow = bump(x, 56, 26) * 0.24 + bump(x, 90, 45) * 0.1 + bump(x, 806, 18) * 0.12
                + bump(x, 872, 9) * 0.14 + bump(x, 735, 14) * 0.06 + bump(x, 292, 12) * 0.08
                + bump(x, 360, 12) * 0.06 + bump(x, 540, 12) * 0.03 + bump(x, 1000, 12) * 0.06 + 0.012;
            if (rnd() < yellow * (1 - bump(x, 935, 34))) {
                ctx.fillStyle = rnd() < 0.5 ? '#c8c66e' : '#8796a8';
                ctx.fillRect(x, y, rnd() < 0.4 ? 2 : 1, 1);
            }
        }
        if (y === 58) {
            ctx.fillStyle = '#c8cc90';
            for (let x = 555; x < 765; x += 3) {
                if (rnd() < 0.6) ctx.fillRect(x, y, 3, 1);
            }
        }
    }

    // [x from, x to, y from, y to, share of orange, share of yellow]
    const signals = [
        [305, 322, 4, 28, 0.6, 0.3],
        [305, 322, 28, 39, 0.2, 0.4],
        [328, 346, 4, 28, 0.6, 0.3],
        [328, 346, 28, 40, 0.1, 0.5],
        [374, 395, 4, 32, 1, 0],
        [447, 462, 1, 39, 0, 0.45],
        [305, 322, 47, 66, 0.3, 0.45],
        [330, 345, 47, 66, 0.08, 0.5],
        [377, 393, 49, 66, 0.35, 0.4],
        [447, 462, 46, 66, 0.25, 0.5]
    ];
    for (const [x1, x2, y1, y2, hot, warm] of signals) {
        for (let y = y1; y < y2; y++) {
            const shift = Math.round(rnd() * 4 - 2);
            const grow = Math.round(rnd() * 3);
            for (let x = x1 - grow + shift; x < x2 + grow + shift; x += 2) {
                const q = rnd();
                if (q < hot) ctx.fillStyle = '#ff4a00';
                else if (q < hot + warm) ctx.fillStyle = rnd() < 0.6 ? '#ecd850' : '#f2a32c';
                else continue;
                ctx.fillRect(x, y, 3, 1);
            }
        }
    }

    // period separator
    ctx.fillStyle = '#001a30';
    ctx.fillRect(0, 41, width, 3);
    ctx.fillStyle = '#2f94b0';
    ctx.fillRect(0, 41, width, 1);
    ctx.fillStyle = '#20b050';
    ctx.fillRect(0, 43, width, 1);
    for (let x = 0; x < width; x++) {
        if (rnd() < bump(x, 200, 30) * 0.8 + bump(x, 780, 70) * 0.5 + 0.06) {
            ctx.fillStyle = '#6fc060';
            ctx.fillRect(x, 40 + Math.floor(rnd() * 4), 1, 1);
        }
    }

    // spectrum below the waterfall
    const shade = ctx.createLinearGradient(0, 66, 0, height);
    shade.addColorStop(0, '#000064');
    shade.addColorStop(1, '#000030');
    ctx.fillStyle = shade;
    ctx.fillRect(0, 66, width, height - 66);
    ctx.fillStyle = '#8c8cb8';
    for (const y of [71, 76, 82, 87]) {
        for (let x = 0; x < width; x += 2) ctx.fillRect(x, y, 1, 1);
    }
    for (let x = FIRST; x < width; x += HZ_500) {
        for (let y = 66; y < height; y += 2) ctx.fillRect(x, y, 1, 1);
    }
    ctx.strokeStyle = '#2fae3c';
    ctx.beginPath();
    ctx.moveTo(304, 92);
    ctx.lineTo(310, 91);
    ctx.lineTo(322, 92);
    ctx.moveTo(326, 92);
    ctx.lineTo(334, 91);
    ctx.lineTo(344, 92);
    ctx.moveTo(374, 93);
    ctx.lineTo(376, 87);
    ctx.lineTo(384, 85);
    ctx.lineTo(392, 87);
    ctx.lineTo(395, 93);
    ctx.stroke();
}
```
